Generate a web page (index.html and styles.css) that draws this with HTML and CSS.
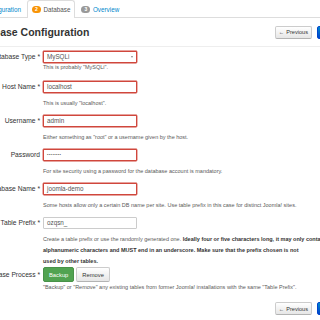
FILE: index.html
```html
<!DOCTYPE html>
<html>
<head>
<meta charset="utf-8">
<link rel="stylesheet" href="styles.css">
</head>
<body>
<div class="page">
  <ul class="tabs">
    <li class="tab"><span class="badge">1</span><span class="link">Configuration</span></li>
    <li class="tab active"><span class="badge orange">2</span><span>Database</span></li>
    <li class="tab"><span class="badge grey">3</span><span class="link">Overview</span></li>
  </ul>

  <div class="header">
    <h3 class="title">Database Configuration</h3>
    <div class="nav-btns">
      <span class="btn"><span class="arrow">&#8592;</span> Previous</span>
      <span class="btn primary">Next <span class="arrow">&#8594;</span></span>
    </div>
  </div>

  <div class="form">
    <div class="row row-first">
      <label class="label">Database Type *</label>
      <div class="control">
        <div class="input invalid select"><span>MySQLi</span><span class="caret"></span></div>
        <div class="help help-tight">This is probably "MySQLi".</div>
      </div>
    </div>
    <div class="row">
      <label class="label">Host Name *</label>
      <div class="control">
        <div class="input invalid">localhost</div>
        <div class="help">This is usually "localhost".</div>
      </div>
    </div>
    <div class="row">
      <label class="label">Username *</label>
      <div class="control">
        <div class="input invalid">admin</div>
        <div class="help">Either something as "root" or a username given by the host.</div>
      </div>
    </div>
    <div class="row">
      <label class="label">Password</label>
      <div class="control">
        <div class="input invalid pw">&#8226;&#8226;&#8226;&#8226;&#8226;&#8226;&#8226;&#8226;</div>
        <div class="help">For site security using a password for the database account is mandatory.</div>
      </div>
    </div>
    <div class="row">
      <label class="label">Database Name *</label>
      <div class="control">
        <div class="input invalid">joomla-demo</div>
        <div class="help">Some hosts allow only a certain DB name per site. Use table prefix in this case for distinct Joomla! sites.</div>
      </div>
    </div>
    <div class="row row-prefix">
      <label class="label">Table Prefix *</label>
      <div class="control">
        <div class="input">ozqsn_</div>
        <div class="help">Create a table prefix or use the randomly generated one. <b>Ideally four or five characters long, it may only contain</b><br><b>alphanumeric characters and MUST end in an underscore. Make sure that the prefix chosen is not</b><br><b>used by other tables.</b></div>
      </div>
    </div>
    <div class="row row-process">
      <label class="label">Old Database Process *</label>
      <div class="control">
        <div class="toggle">
          <span class="btn success">Backup</span>
          <span class="btn">Remove</span>
        </div>
        <div class="help help-tight">"Backup" or "Remove" any existing tables from former Joomla! installations with the same "Table Prefix".</div>
      </div>
    </div>
  </div>

  <div class="footer">
    <div class="nav-btns">
      <span class="btn"><span class="arrow">&#8592;</span> Previous</span>
      <span class="btn primary">Next <span class="arrow">&#8594;</span></span>
    </div>
  </div>
</div>
</body>
</html>
```
FILE: styles.css
```css
html, body {
  margin: 0;
  padding: 0;
  background: #fff;
  overflow: hidden;
}
body {
  font-family: "Liberation Sans", Arial, sans-serif;
  font-size: 6.3px;
  color: #333;
  width: 320px;
  height: 320px;
}
.page {
  margin-left: -46px;
  width: 402px;
}
.tabs {
  list-style: none;
  margin: 0 0 0 13px;
  padding: 0;
  display: flex;
  align-items: flex-end;
  height: 17px;
  border-bottom: 1px solid #ddd;
}
.tab {
  display: flex;
  align-items: center;
  gap: 2.5px;
  height: 16px;
  padding: 0 4px;
  margin-right: 1px;
  border: 1px solid transparent;
  border-bottom: 0;
  color: #555;
}
.tab.active {
  background: #fff;
  border-color: #ddd;
  border-radius: 3px 3px 0 0;
  height: 17px;
  margin-bottom: -1px;
}
.link {
  color: #0088cc;
}
.badge {
  display: inline-block;
  min-width: 7px;
  height: 7px;
  line-height: 7px;
  padding: 0 1px;
  border-radius: 4px;
  background: #999;
  color: #fff;
  font-size: 5px;
  font-weight: bold;
  text-align: center;
}
.badge.orange { background: #f89406; }
.badge.grey { background: #999; }

.header {
  display: flex;
  align-items: center;
  height: 28px;
  border-bottom: 1px solid #eee;
}
.title {
  margin: 0 0 0 17px;
  font-size: 10.5px;
  font-weight: bold;
  color: #333;
}
.nav-btns {
  margin-left: auto;
  display: flex;
  gap: 5px;
}
.btn {
  display: inline-flex;
  align-items: center;
  gap: 2px;
  height: 13px;
  padding: 0 3px;
  box-sizing: border-box;
  border: 1px solid #ccc;
  border-bottom-color: #b3b3b3;
  border-radius: 2px;
  background: linear-gradient(#ffffff, #e6e6e6);
  color: #333;
  font-size: 5.6px;
}
.arrow { font-size: 5.5px; }
.btn.primary {
  background: linear-gradient(#0088cc, #0044cc);
  border-color: #0044cc;
  color: #fff;
  width: 39px;
}
.toggle { display: flex; gap: 2px; }
.toggle .btn {
  height: 15px;
  padding: 0 5px;
  font-size: 5.8px;
}
.toggle .btn.success {
  background: #51a351;
  border-color: #499249;
  color: #fff;
}

.form { padding-top: 4px; }
.row {
  display: grid;
  grid-template-columns: 86px 1fr;
  column-gap: 3px;
  margin-bottom: 6px;
}
.row-first { margin-bottom: 8px; }
.row-prefix { margin-bottom: 0; }
.row-process { margin-bottom: 0; }
.label {
  text-align: right;
  height: 12px;
  line-height: 12px;
  white-space: nowrap;
  color: #333;
  font-size: 6.7px;
}
.row-process .label { height: 15px; line-height: 15px; }
.input {
  width: 94px;
  height: 12px;
  box-sizing: border-box;
  border: 1px solid #ccc;
  border-radius: 1px;
  padding: 0 3px;
  line-height: 10px;
  color: #555;
  background: #fff;
  display: flex;
  align-items: center;
}
.input.invalid {
  border-color: #d0473c;
  box-shadow: 0 0 0 0.4px #d0473c;
}
.select { justify-content: space-between; }
.caret {
  width: 0;
  height: 0;
  border-left: 1.5px solid transparent;
  border-right: 1.5px solid transparent;
  border-top: 2px solid #888;
}
.pw { letter-spacing: 0.4px; font-size: 4px; }
.help {
  margin-top: 5px;
  line-height: 11px;
  color: #5a5a5a;
  white-space: nowrap;
  font-size: 5.5px;
}
.help-tight { margin-top: -1px; }
.row-process .help-tight { margin-top: 0; }
.help b { font-weight: bold; color: #333; }

.footer {
  display: flex;
  padding-top: 9px;
}
```
